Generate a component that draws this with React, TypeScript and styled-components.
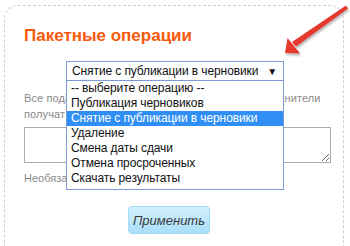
import styled, { createGlobalStyle } from 'styled-components'

const OPTIONS = [
  '-- выберите операцию --',
  'Публикация черновиков',
  'Снятие с публикации в черновики',
  'Удаление',
  'Смена даты сдачи',
  'Отмена просроченных',
  'Скачать результаты',
]

const SELECTED = 2

const GlobalStyle = createGlobalStyle`
  html, body {
    margin: 0;
    padding: 0;
    background: #fff;
    font-family: "Liberation Sans", Arial, sans-serif;
  }
`

const App = () => {
  return (
    <>
      <GlobalStyle />
      <Page>
        <Card>
          <Title>Пакетные операции</Title>
          <SelectWrap>
            <SelectBox>
              <span>{OPTIONS[SELECTED]}</span>
              <Caret>▼</Caret>
            </SelectBox>
            <OptionList>
              {OPTIONS.map((opt, i) => (
                <Option key={opt} active={i === SELECTED}>
                  {opt}
                </Option>
              ))}
            </OptionList>
          </SelectWrap>
          <Hint>
            Все подавшие работы по данному заданию исполнители
            <br />
            получат уведомление с вашим комментарием
          </Hint>
          <Comment />
          <Note>Необязательный комментарий к операции</Note>
          <Actions>
            <ApplyButton>Применить</ApplyButton>
          </Actions>
        </Card>
        <Arrow viewBox="0 0 350 246" width="350" height="246">
          <defs>
            <filter id="sh" x="-20%" y="-20%" width="140%" height="140%">
              <feDropShadow dx="1" dy="2" stdDeviation="1.2" floodColor="#000" floodOpacity="0.3" />
            </filter>
          </defs>
          <g filter="url(#sh)" fill="#e5392f">
            <polygon points="346,5.5 348,8.5 296,46.5 292,42" />
            <polygon points="285,53 287.5,38 300,53.5" />
          </g>
        </Arrow>
      </Page>
    </>
  )
}

export default App

const Page = styled.div`
  position: relative;
  width: 350px;
  height: 246px;
  overflow: hidden;
  padding: 5px 0 0 4px;
  box-sizing: border-box;
`

const Card = styled.div`
  box-sizing: border-box;
  width: 340px;
  height: 260px;
  border: 1px dashed #cfcfcf;
  border-radius: 14px;
  padding: 19px 0 0 19px;
`

const Title = styled.h2`
  margin: 0;
  font-size: 17px;
  line-height: 21px;
  font-weight: bold;
  color: #fa5a0c;
`

const SelectWrap = styled.div`
  position: relative;
  width: 218px;
  margin: 15px 0 0 42px;
  z-index: 2;
`

const SelectBox = styled.div`
  box-sizing: border-box;
  height: 20px;
  border: 1px solid #7c9bd6;
  display: flex;
  align-items: center;
  justify-content: space-between;
  padding: 0 6px 0 5px;
  font-size: 12px;
  letter-spacing: -0.1px;
  white-space: nowrap;
  color: #111;
  background: #fff;
`

const Caret = styled.span`
  font-size: 10px;
  color: #111;
`

const OptionList = styled.ul`
  position: absolute;
  left: 0;
  top: 19px;
  width: 100%;
  box-sizing: border-box;
  margin: 0;
  padding: 0 0 3px;
  list-style: none;
  background: #fff;
  border: 1px solid #7c9bd6;
`

const Option = styled.li<{ active?: boolean }>`
  height: 15px;
  line-height: 15px;
  padding-left: 4px;
  font-size: 12px;
  letter-spacing: -0.1px;
  white-space: nowrap;
  color: ${(p) => (p.active ? '#fff' : '#111')};
  background: ${(p) => (p.active ? '#2f8ff5' : 'transparent')};
`

const Hint = styled.p`
  margin: 9px 0 0;
  font-size: 11px;
  line-height: 16px;
  letter-spacing: 0.1px;
  color: #8a8a8a;
  white-space: nowrap;
`

const Comment = styled.textarea`
  display: block;
  box-sizing: border-box;
  width: 307px;
  height: 36px;
  margin: 5px 0 0;
  border: 1px solid #ababab;
  resize: both;
`

const Note = styled.p`
  margin: 7px 0 0;
  font-size: 11px;
  line-height: 16px;
  color: #8a8a8a;
  white-space: nowrap;
`

const Actions = styled.div`
  display: flex;
  padding-left: 104px;
  margin-top: 20px;
`

const ApplyButton = styled.button`
  box-sizing: border-box;
  width: 82px;
  height: 28px;
  border: 1px solid #9fdaf6;
  border-radius: 4px;
  background: linear-gradient(#d3f1fd, #a9defa);
  font-family: "Liberation Sans", Arial, sans-serif;
  font-style: italic;
  font-size: 13px;
  color: #3a3a3a;
  padding: 0;
`

const Arrow = styled.svg`
  position: absolute;
  left: 0;
  top: 0;
  pointer-events: none;
  z-index: 3;
`
